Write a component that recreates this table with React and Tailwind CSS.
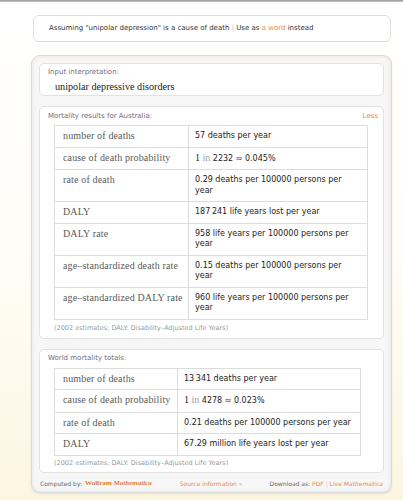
const sans = { fontFamily: '"DejaVu Sans", Verdana, sans-serif' };
const serif = { fontFamily: '"Liberation Serif", "Times New Roman", serif' };

const australia = [
    ['number of deaths', <>57 deaths per year</>],
    ['cause of death probability', <><span style={serif} className="text-[10px]">1 <span className="text-gray-400">in</span></span> 2232 ≈ 0.045%</>],
    ['rate of death', <>0.29 deaths per 100000 persons per<br />year</>],
    ['DALY', <>187{'\u2009'}241 life years lost per year</>],
    ['DALY rate', <>958 life years per 100000 persons per<br />year</>],
    ['age–standardized death rate', <>0.15 deaths per 100000 persons per<br />year</>],
    ['age–standardized DALY rate', <>960 life years per 100000 persons per<br />year</>],
];

const world = [
    ['number of deaths', <>13{'\u2009'}341 deaths per year</>],
    ['cause of death probability', <><span style={serif} className="text-[10px]">1 <span className="text-gray-400">in</span></span> 4278 ≈ 0.023%</>],
    ['rate of death', <>0.21 deaths per 100000 persons per year</>],
    ['DALY', <>67.29 million life years lost per year</>],
];

function Table({ rows, labelW, valueW }) {
    return (
        <table className="table-fixed border-collapse border border-[#dcdcdc] ml-[14px]" style={{ width: labelW + valueW }}>
            <tbody>
                {rows.map(([label, value]) => (
                    <tr key={label} className="border-b border-[#dcdcdc]">
                        <td
                            style={{ ...serif, width: labelW }}
                            className="align-top border-r border-[#dcdcdc] pl-[8px] pr-0 pt-[5px] pb-[5px] text-[10px] leading-[10.5px] text-[#5a5a5a] tracking-[0.15px] whitespace-nowrap"
                        >
                            {label}
                        </td>
                        <td
                            style={{ ...sans, width: valueW }}
                            className="align-top pl-[6px] pr-0 pt-[5px] pb-[5px] text-[8px] leading-[10.5px] text-[#222] whitespace-nowrap"
                        >
                            {value}
                        </td>
                    </tr>
                ))}
            </tbody>
        </table>
    );
}

function Pod({ title, children, right }) {
    return (
        <div className="bg-white border border-[#e2e2e2] rounded-[5px]">
            <div className="flex justify-between items-center h-[18px] pl-[8px] pr-[5px]">
                <span style={sans} className="text-[7px] text-[#706a82]">{title}</span>
                {right}
            </div>
            {children}
        </div>
    );
}

export default function App() {
    return (
        <div className="w-[403px] h-[500px] overflow-hidden bg-gradient-to-b from-white via-[#fffdf7] to-[#fcf6e1]">
            {/* top edge */}
            <div className="h-[2px] bg-gradient-to-b from-[#9a9a9a] to-[#c8c8c8]"></div>

            {/* assumption bar */}
            <div className="ml-[33px] mt-[13px] w-[358px] h-[27px] bg-white border border-[#dedede] rounded-[6px] flex items-center pl-[15px]">
                <span style={sans} className="text-[7px] text-[#333]">
                    Assuming "unipolar depression" is a cause of death <span className="text-[#bbb]">|</span> Use as <span className="text-[#e8894f]">a word</span> instead
                </span>
            </div>

            {/* main results pane */}
            <div className="ml-[31px] mt-[13px] w-[361px] h-[438px] rounded-[9px] border border-[#dadada] bg-[#f7f7f7] shadow-[inset_0_0_4px_rgba(0,0,0,0.08),0_1px_2px_rgba(0,0,0,0.1)] px-[7px] pt-[7px]">
                <div className="flex flex-col gap-[10px]">
                    {/* input interpretation */}
                    <div className="bg-white border border-[#e2e2e2] rounded-[5px] h-[33px] pl-[8px] pt-[3px]">
                        <div style={sans} className="text-[7px] text-[#706a82] leading-[10px]">Input interpretation:</div>
                        <div style={serif} className="text-[10.2px] text-[#222] pl-[7px] mt-[4px] leading-[12px]">unipolar depressive disorders</div>
                    </div>

                    {/* Australia */}
                    <Pod title="Mortality results for Australia:" right={<span style={sans} className="text-[7px] text-[#e8894f]">Less</span>}>
                        <Table rows={australia} labelW={134} valueW={179} />
                        <div style={sans} className="text-[6.5px] text-[#9a9a9a] pl-[14px] h-[18px] flex items-center">
                            (2002 estimates; DALY: Disability–Adjusted Life Years)
                        </div>
                    </Pod>

                    {/* World */}
                    <Pod title="World mortality totals:">
                        <Table rows={world} labelW={123} valueW={183} />
                        <div style={sans} className="text-[6.5px] text-[#9a9a9a] pl-[14px] h-[16px] flex items-center">
                            (2002 estimates; DALY: Disability–Adjusted Life Years)
                        </div>
                    </Pod>
                </div>

                {/* footer */}
                <div className="flex items-center h-[22px] pl-[1px] pr-[1px]">
                    <span style={sans} className="text-[6px] text-[#666]">Computed by:</span>
                    <span style={serif} className="text-[7px] font-bold text-[#e07a34] ml-[3px]">
                        Wolfram <i>Mathematica</i>
                    </span>
                    <span style={sans} className="text-[6px] text-[#e8894f] ml-[28px]">Source information »</span>
                    <span style={sans} className="text-[6px] text-[#666] ml-auto">
                        Download as: <span className="text-[#e8894f]">PDF</span> <span className="text-[#ccc]">|</span> <span className="text-[#e8894f]">Live <i>Mathematica</i></span>
                    </span>
                </div>
            </div>
        </div>
    );
}
